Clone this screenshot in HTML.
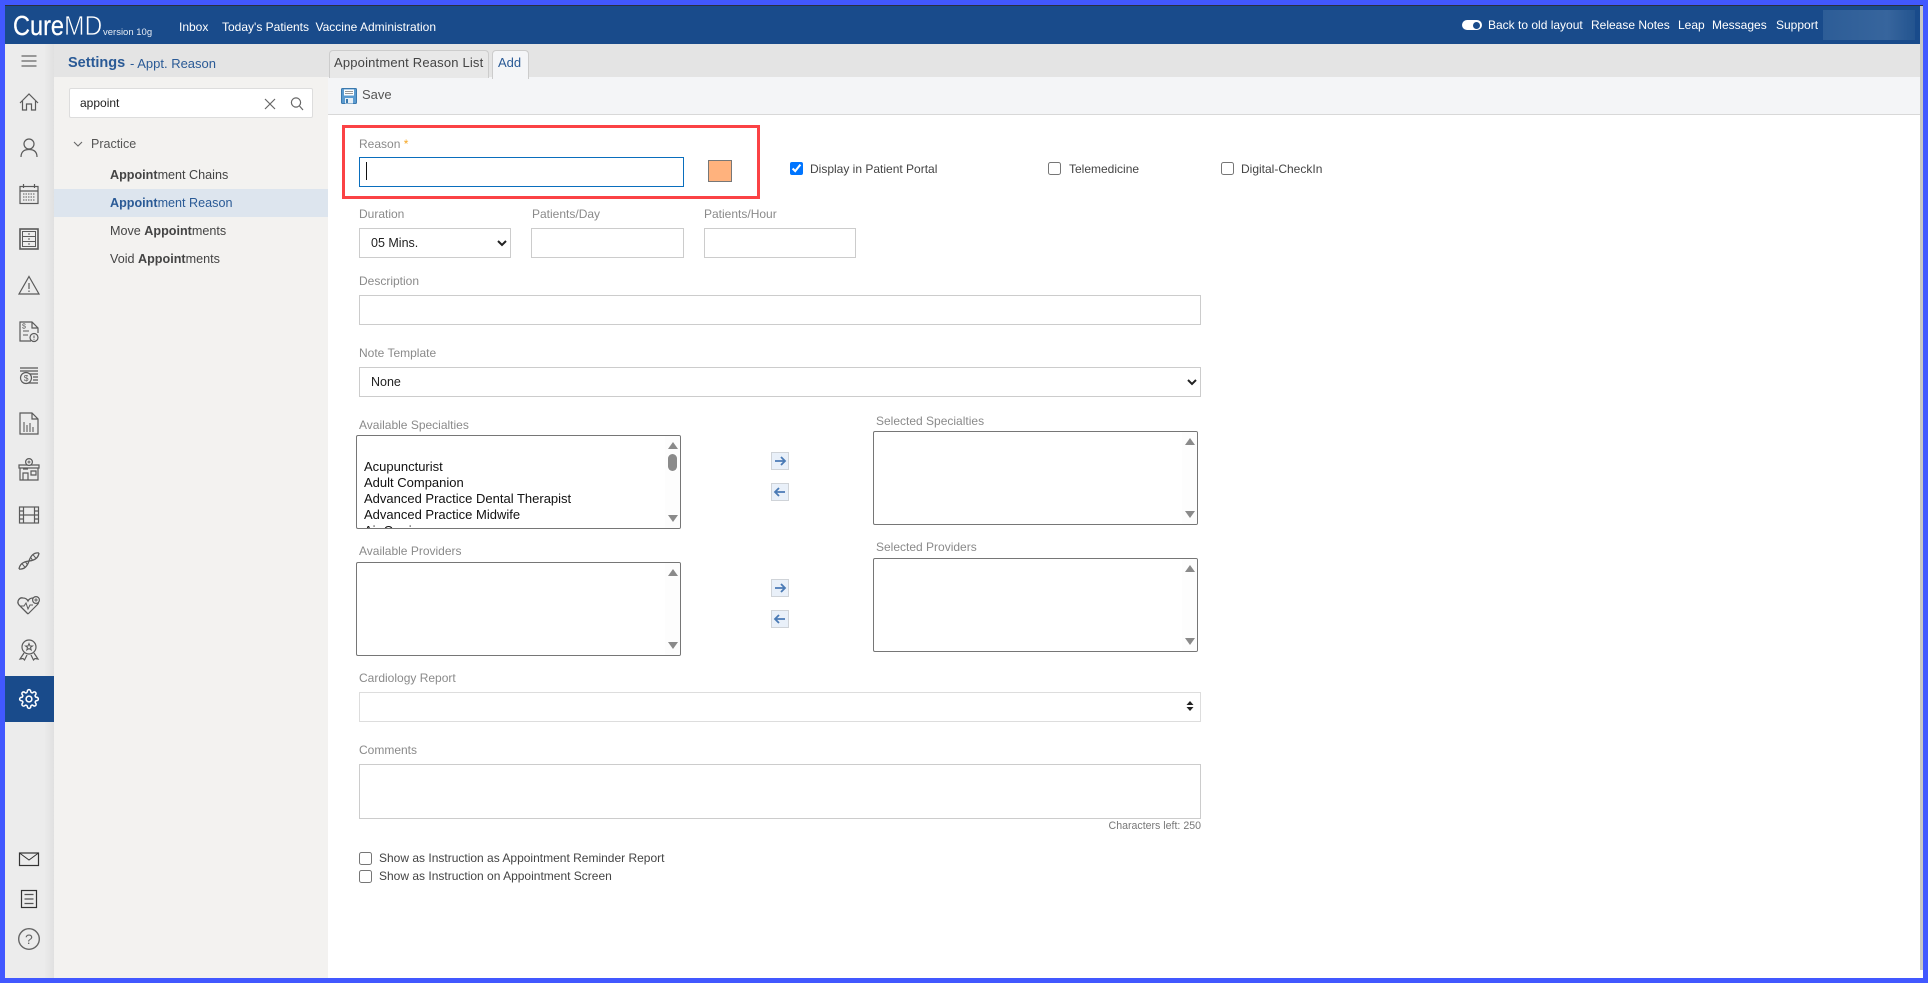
<!DOCTYPE html>
<html><head><meta charset="utf-8"><title>CureMD</title>
<style>
html,body{margin:0;padding:0;width:1928px;height:983px;overflow:hidden;background:#fff;font-family:"Liberation Sans",Arial,sans-serif;}
.b{position:absolute;box-sizing:border-box;}
.t{position:absolute;white-space:nowrap;line-height:16px;font-size:12px;}
.n{color:#fff;}
.l{color:#8a8a8a;}
.f{position:absolute;box-sizing:border-box;background:#fff;border:1px solid #ccc;}
select{position:absolute;box-sizing:border-box;background:#fff;border:1px solid #ccc;border-radius:0;font-family:"Liberation Sans",sans-serif;font-size:12.5px;color:#222;padding:0 0 0 7px;margin:0;}
input[type=checkbox]{position:absolute;margin:0;width:13px;height:13px;}
.lb{position:absolute;box-sizing:border-box;width:325px;height:94px;background:#fff;border:1px solid #767676;border-radius:2px;overflow:hidden;}
.sb{position:absolute;right:0;top:0;bottom:0;width:15px;background:#fdfdfd;}
.up{position:absolute;left:2.5px;top:6px;width:0;height:0;border-left:5px solid transparent;border-right:5px solid transparent;border-bottom:7px solid #8a8a8a;}
.dn{position:absolute;left:2.5px;bottom:6px;width:0;height:0;border-left:5px solid transparent;border-right:5px solid transparent;border-top:7px solid #8a8a8a;}
.ab{position:absolute;box-sizing:border-box;width:18px;height:18px;background:#e9f0f9;border:1px solid #cfd3d8;}
.ab svg{position:absolute;left:1px;top:1px;}
.it{position:absolute;left:7px;font-size:13px;line-height:16px;color:#111;white-space:nowrap;}
.m{color:#444;font-size:12.6px;}
.m b{font-weight:bold;}
</style></head>
<body>
<!-- content backgrounds -->
<div class="b" style="left:54px;top:44px;width:274px;height:934px;background:#f3f2f0"></div>
<div class="b" style="left:5px;top:44px;width:49px;height:934px;background:linear-gradient(to right,#ececec 0,#ececec 80%,#e0e0e0 100%)"></div>
<div class="b" style="left:54px;top:44px;width:1866px;height:33px;background:#e4e4e4"></div>
<div class="b" style="left:54px;top:77px;width:274px;height:1px;background:#f3f2f0"></div>
<div class="b" style="left:328px;top:77px;width:1592px;height:38px;background:#f4f5f7;border-bottom:1px solid #d8d8d8"></div>
<div class="b" style="left:5px;top:676px;width:49px;height:46px;background:#194b8b"></div>

<!-- header -->
<div class="b" style="left:5px;top:6px;width:1915px;height:38px;background:#194b8b"></div>
<div class="t" style="left:13px;top:13px;line-height:26px;font-size:28px;color:#fff;transform:scaleX(.84);transform-origin:0 50%;-webkit-text-stroke:.25px #fff">Cure</div>
<div class="t" style="left:64px;top:13px;line-height:26px;font-size:28px;color:#fff;transform:scaleX(.88);transform-origin:0 50%;-webkit-text-stroke:.7px #194b8b">MD</div>
<div class="t n" style="left:103px;top:25px;font-size:9.5px;color:#e6ecf4;">version 10g</div>
<div class="t n" style="left:179px;top:19px">Inbox</div>
<div class="t n" style="left:222px;top:19px">Today's Patients</div>
<div class="t n" style="left:315.5px;top:19px">Vaccine Administration</div>
<div class="b" style="left:1462px;top:20px;width:20px;height:10px;border-radius:5px;background:#fff"></div>
<div class="b" style="left:1473px;top:22px;width:7px;height:7px;border-radius:50%;background:#194b8b"></div>
<div class="t n" style="left:1488px;top:17px">Back to old layout</div>
<div class="t n" style="left:1591px;top:17px">Release Notes</div>
<div class="t n" style="left:1678px;top:17px">Leap</div>
<div class="t n" style="left:1712px;top:17px">Messages</div>
<div class="t n" style="left:1776px;top:17px">Support</div>
<div class="b" style="left:1823px;top:10px;width:92px;height:30px;background:linear-gradient(to right,#2d5d97,#37659d 70%,#23548f)"></div>

<!-- sidebar icons -->
<svg style="position:absolute;left:0;top:0" width="60" height="983" fill="none" stroke="#5a5a5a" stroke-width="1.2">
<g transform="translate(29,61)"><path d="M-7.5-5H7.5M-7.5 0H7.5M-7.5 5H7.5" stroke="#666"/></g>
<g transform="translate(29,102)"><path d="M-9 1L0-8 9 1M-6.5-1V8H-2.5V2H2.5V8H6.5V-1"/></g>
<g transform="translate(29,148)"><circle cy="-4" r="5"/><path d="M-8 9C-8 3-4 1.5 0 1.5 4 1.5 8 3 8 9"/></g>
<g transform="translate(29,194)"><rect x="-9" y="-7.5" width="18" height="17"/><path d="M-9-3H9M-5.5-10V-6M5.5-10V-6"/><path d="M-6 0H6M-6 3H6M-6 6H6" stroke-dasharray="1.5 1" stroke-width="1"/></g>
<g transform="translate(29,239)"><rect x="-9" y="-10" width="18" height="20" stroke-width="1.6"/><rect x="-6.5" y="-7.5" width="13" height="15" stroke-width="1"/><path d="M-6.5-2.5H6.5M-6.5 2.5H6.5" stroke-width="1"/><path d="M-1-5H1M-1 0H1M-1 5H1" stroke-width="1"/></g>
<g transform="translate(29,286)"><path d="M0-9.5L10 8H-10Z"/><path d="M0-3V3M0 4.5V6"/></g>
<g transform="translate(29,332)"><path d="M2 9H-9V-10H3L9-4V1M3-10V-4H9"/><path d="M-6-1H0M-6 3H-1" stroke-width="1"/><text x="-7" y="-3.5" font-size="7" fill="#5a5a5a" stroke="none" font-family="Liberation Sans">$</text><circle cx="5" cy="5.5" r="4"/><path d="M5 3.5V6M5 6.8V7.8" stroke-width="1"/></g>
<g transform="translate(29,377)"><path d="M-9-9H9M-9-6H9M-4-3H9M4 0H9M4 3H9M-4 6H9" stroke-width="1.2"/><circle cx="-3" cy="1" r="5.5" fill="#ececec"/><text x="-5.3" y="4.2" font-size="8.5" fill="#5a5a5a" stroke="none" font-family="Liberation Sans">$</text></g>
<g transform="translate(29,424)"><path d="M-9-11H3L9-5V10H-9ZM3-11V-5H9"/><path d="M-5 8V-2M-2 8V1M1 8V-1M4 8V3" stroke="#6a6a6a"/></g>
<g transform="translate(29,470)"><path d="M-10-5H10V-2H-10ZM-9-2V10H9V-2"/><path d="M-6 10V3H-1V10M-6-1H-1M2 1H7V5H2Z"/><circle cy="-8" r="3.4" fill="#ececec"/><path d="M-1.5-8H1.5M0-9.5V-6.5" stroke-width=".9"/></g>
<g transform="translate(29,515)"><rect x="-9.5" y="-8" width="19" height="16"/><path d="M-5.5-8V8M5.5-8V8M-5.5 0H5.5M-9.5-4H-5.5M-9.5 0H-5.5M-9.5 4H-5.5M5.5-4H9.5M5.5 0H9.5M5.5 4H9.5"/></g>
<g transform="translate(29,561)"><path d="M-10 8Q-3 9 0 0T10-8" stroke-width="1.3"/><path d="M-10 8Q-9 1 0 0T10-8" stroke-width="1.3"/><path d="M-6.7 3L-4 6.3M-3.3 1.2L-1.8 3.4M6.7-3L4-6.3M3.3-1.2L1.8-3.4" stroke-width="1"/></g>
<g transform="translate(28,606)"><path d="M0 8L-9-1C-12-5-8-9-5-8-3-8-1-7 0-5 1-7 3-8 5-8" stroke-width="1.3"/><path d="M0 8L9-1C10-2 10.5-3 10.5-3.5"/><path d="M-8 0H-4L-2-3 0 3 2-1H5" stroke-width="1"/><circle cx="8" cy="-6" r="3.4"/><path d="M6.3-6H9.7M8-7.7V-4.3" stroke-width=".9"/></g>
<g transform="translate(29,650)"><circle cy="-3" r="7"/><path d="M0-6.5L1-4H3.5L1.5-2.5 2.2 0 0-1.5-2.2 0-1.5-2.5-3.5-4H-1Z" stroke-width="1"/><path d="M-5 3L-9 9-6 8.5-4.5 10-2 5M5 3L9 9 6 8.5 4.5 10 2 5"/></g>
<g transform="translate(18.8,688.8) scale(.85)" stroke="#fff" stroke-width="1.8"><circle cx="12" cy="12" r="3.4"/><path d="M19.4 15a1.65 1.65 0 0 0 .33 1.82l.06.06a2 2 0 0 1 0 2.83 2 2 0 0 1-2.83 0l-.06-.06a1.65 1.65 0 0 0-1.82-.33 1.65 1.65 0 0 0-1 1.51V21a2 2 0 0 1-2 2 2 2 0 0 1-2-2v-.09A1.65 1.65 0 0 0 9 19.4a1.65 1.65 0 0 0-1.82.33l-.06.06a2 2 0 0 1-2.83 0 2 2 0 0 1 0-2.83l.06-.06a1.65 1.65 0 0 0 .33-1.82 1.65 1.65 0 0 0-1.51-1H3a2 2 0 0 1-2-2 2 2 0 0 1 2-2h.09A1.65 1.65 0 0 0 4.6 9a1.65 1.65 0 0 0-.33-1.82l-.06-.06a2 2 0 0 1 0-2.83 2 2 0 0 1 2.83 0l.06.06a1.65 1.65 0 0 0 1.82.33H9a1.65 1.65 0 0 0 1-1.51V3a2 2 0 0 1 2-2 2 2 0 0 1 2 2v.09a1.65 1.65 0 0 0 1 1.51 1.65 1.65 0 0 0 1.82-.33l.06-.06a2 2 0 0 1 2.83 0 2 2 0 0 1 0 2.83l-.06.06a1.65 1.65 0 0 0-.33 1.82V9a1.65 1.65 0 0 0 1.51 1H21a2 2 0 0 1 2 2 2 2 0 0 1-2 2h-.09a1.65 1.65 0 0 0-1.51 1z"/></g>
<g transform="translate(29,859)" stroke="#333"><rect x="-9.5" y="-6" width="19" height="12.5"/><path d="M-9.5-6L0 1 9.5-6" stroke-width="1"/></g>
<g transform="translate(29,899)" stroke="#333"><rect x="-7.5" y="-8.5" width="15" height="17"/><path d="M-4.5-4.5H4.5M-4.5 0H4.5M-4.5 4.5H4.5" stroke="#555"/></g>
<g transform="translate(29,939)"><circle r="10.3" stroke="#666" stroke-width="1.4"/><text x="-4" y="5" font-size="14" fill="#666" stroke="none" font-family="Liberation Sans">?</text></g>
</svg>

<!-- left panel -->
<div class="t" style="left:68px;top:55px;font-size:14.5px;font-weight:bold;color:#2a5a96;">Settings</div>
<div class="t" style="left:130px;top:56px;font-size:13px;color:#2a5a96;">- Appt. Reason</div>
<div class="b" style="left:69px;top:88px;width:244px;height:30px;background:#fff;border:1px solid #ddd;border-radius:2px"></div>
<div class="t" style="left:80px;top:95px;color:#222">appoint</div>
<svg style="position:absolute;left:262px;top:96px" width="46" height="16" fill="none" stroke="#666" stroke-width="1.2"><path d="M3 3L13 13M13 3L3 13"/><circle cx="34" cy="6.5" r="4.6"/><path d="M37.5 10L41 14"/></svg>
<svg style="position:absolute;left:73px;top:140px" width="10" height="8" fill="none" stroke="#666" stroke-width="1.1"><path d="M1 2L5 6 9 2"/></svg>
<div class="t" style="left:91px;top:136px;font-size:12.5px;color:#555">Practice</div>
<div class="b" style="left:54px;top:189px;width:274px;height:28px;background:#dde5ee"></div>
<div class="t m" style="left:110px;top:167px"><b>Appoint</b>ment Chains</div>
<div class="t m" style="left:110px;top:195px;color:#2a5a96"><b>Appoint</b>ment Reason</div>
<div class="t m" style="left:110px;top:223px">Move <b>Appoint</b>ments</div>
<div class="t m" style="left:110px;top:251px">Void <b>Appoint</b>ments</div>

<!-- tabs -->
<div class="b" style="left:329px;top:50px;width:160px;height:28px;background:#e8e8e8;border:1px solid #ccc;border-bottom:0;border-radius:4px 4px 0 0"></div>
<div class="t" style="left:334px;top:55px;font-size:13px;color:#444;letter-spacing:.18px">Appointment Reason List</div>
<div class="b" style="left:492px;top:50px;width:37px;height:29px;background:#f4f5f7;border:1px solid #ccc;border-bottom:0;border-radius:4px 4px 0 0"></div>
<div class="t" style="left:498px;top:55px;font-size:13px;color:#2a5a96;">Add</div>

<!-- toolbar -->
<svg style="position:absolute;left:341px;top:88px" width="16" height="16" fill="none"><rect x=".5" y=".5" width="15" height="15" rx="1" fill="#5b9bd0" stroke="#3a78ad"/><rect x="3" y="1.5" width="10" height="6" fill="#fff"/><path d="M4 3.5H12M4 5.5H12" stroke="#777" stroke-width=".8"/><rect x="4" y="10" width="8" height="5.5" fill="#e6eef5"/><rect x="5" y="11" width="2" height="4" fill="#3a78ad"/></svg>
<div class="t" style="left:362px;top:87px;font-size:13px;color:#555">Save</div>

<!-- form -->
<div class="b" style="left:342px;top:125px;width:418px;height:74px;border:3px solid #fb4245"></div>
<div class="t l" style="left:359px;top:136px">Reason <span style="color:#f5a623">*</span></div>
<div class="f" style="left:359px;top:157px;width:325px;height:30px;border-color:#0a6ebd"></div>
<div class="b" style="left:366px;top:162px;width:1px;height:18px;background:#111"></div>
<div class="b" style="left:708px;top:160px;width:24px;height:22px;background:#ffb27d;border:1px solid #777"></div>
<input type="checkbox" checked style="left:790px;top:162px">
<div class="t" style="left:810px;top:161px;color:#444">Display in Patient Portal</div>
<input type="checkbox" style="left:1048px;top:162px">
<div class="t" style="left:1069px;top:161px;color:#444">Telemedicine</div>
<input type="checkbox" style="left:1221px;top:162px">
<div class="t" style="left:1241px;top:161px;color:#444">Digital-CheckIn</div>

<div class="t l" style="left:359px;top:206px">Duration</div>
<select style="left:359px;top:228px;width:152px;height:30px"><option>05 Mins.</option></select>
<div class="t l" style="left:532px;top:206px">Patients/Day</div>
<div class="f" style="left:531px;top:228px;width:153px;height:30px"></div>
<div class="t l" style="left:704px;top:206px">Patients/Hour</div>
<div class="f" style="left:704px;top:228px;width:152px;height:30px"></div>

<div class="t l" style="left:359px;top:273px">Description</div>
<div class="f" style="left:359px;top:295px;width:842px;height:30px"></div>
<div class="t l" style="left:359px;top:345px">Note Template</div>
<select style="left:359px;top:367px;width:842px;height:30px"><option>None</option></select>

<div class="t l" style="left:359px;top:417px">Available Specialties</div>
<div class="lb" style="left:356px;top:435px">
<div class="it" style="top:23px">Acupuncturist</div>
<div class="it" style="top:39px">Adult Companion</div>
<div class="it" style="top:55px">Advanced Practice Dental Therapist</div>
<div class="it" style="top:71px">Advanced Practice Midwife</div>
<div class="it" style="top:87px">Air Carrier</div>
<div class="sb"><div class="up"></div><div class="b" style="left:3px;top:18px;width:9px;height:17px;border-radius:5px;background:#8a8a8a"></div><div class="dn"></div></div>
</div>
<div class="t l" style="left:359px;top:543px">Available Providers</div>
<div class="lb" style="left:356px;top:562px"><div class="sb"><div class="up"></div><div class="dn"></div></div></div>

<div class="t l" style="left:876px;top:413px">Selected Specialties</div>
<div class="lb" style="left:873px;top:431px"><div class="sb"><div class="up"></div><div class="dn"></div></div></div>
<div class="t l" style="left:876px;top:539px">Selected Providers</div>
<div class="lb" style="left:873px;top:558px"><div class="sb"><div class="up"></div><div class="dn"></div></div></div>

<div class="ab" style="left:771px;top:452px"><svg width="14" height="14" fill="none" stroke="#4a7ab5" stroke-width="1.8"><path d="M2 7H12M8 3L12 7 8 11"/></svg></div>
<div class="ab" style="left:771px;top:483px"><svg width="14" height="14" fill="none" stroke="#4a7ab5" stroke-width="1.8"><path d="M12 7H2M6 3L2 7 6 11"/></svg></div>
<div class="ab" style="left:771px;top:579px"><svg width="14" height="14" fill="none" stroke="#4a7ab5" stroke-width="1.8"><path d="M2 7H12M8 3L12 7 8 11"/></svg></div>
<div class="ab" style="left:771px;top:610px"><svg width="14" height="14" fill="none" stroke="#4a7ab5" stroke-width="1.8"><path d="M12 7H2M6 3L2 7 6 11"/></svg></div>

<div class="t l" style="left:359px;top:670px">Cardiology Report</div>
<div class="f" style="left:359px;top:692px;width:842px;height:30px;border-color:#ddd"></div>
<svg style="position:absolute;left:1186px;top:701px" width="8" height="10" fill="#222"><path d="M4 0L7.5 4H.5ZM4 10L7.5 6H.5Z"/></svg>
<div class="t l" style="left:359px;top:742px">Comments</div>
<div class="f" style="left:359px;top:764px;width:842px;height:55px"></div>
<div class="t l" style="right:727px;top:818px;font-size:10.6px;color:#777">Characters left: 250</div>
<input type="checkbox" style="left:359px;top:852px">
<div class="t" style="left:379px;top:850px;color:#444;">Show as Instruction as Appointment Reminder Report</div>
<input type="checkbox" style="left:359px;top:870px">
<div class="t" style="left:379px;top:868px;color:#444;">Show as Instruction on Appointment Screen</div>

<!-- frame -->
<div class="b" style="left:1920px;top:6px;width:3px;height:964px;background:#c6c6c6"></div>
<div class="b" style="left:5px;top:5px;width:1918px;height:1px;background:#2b3040"></div>
<div class="b" style="left:0;top:0;width:1928px;height:5px;background:#4158ff"></div>
<div class="b" style="left:0;top:0;width:5px;height:983px;background:#4158ff"></div>
<div class="b" style="left:1923px;top:0;width:5px;height:983px;background:#4158ff"></div>
<div class="b" style="left:0;top:978px;width:1928px;height:5px;background:#4158ff"></div>
</body></html>
